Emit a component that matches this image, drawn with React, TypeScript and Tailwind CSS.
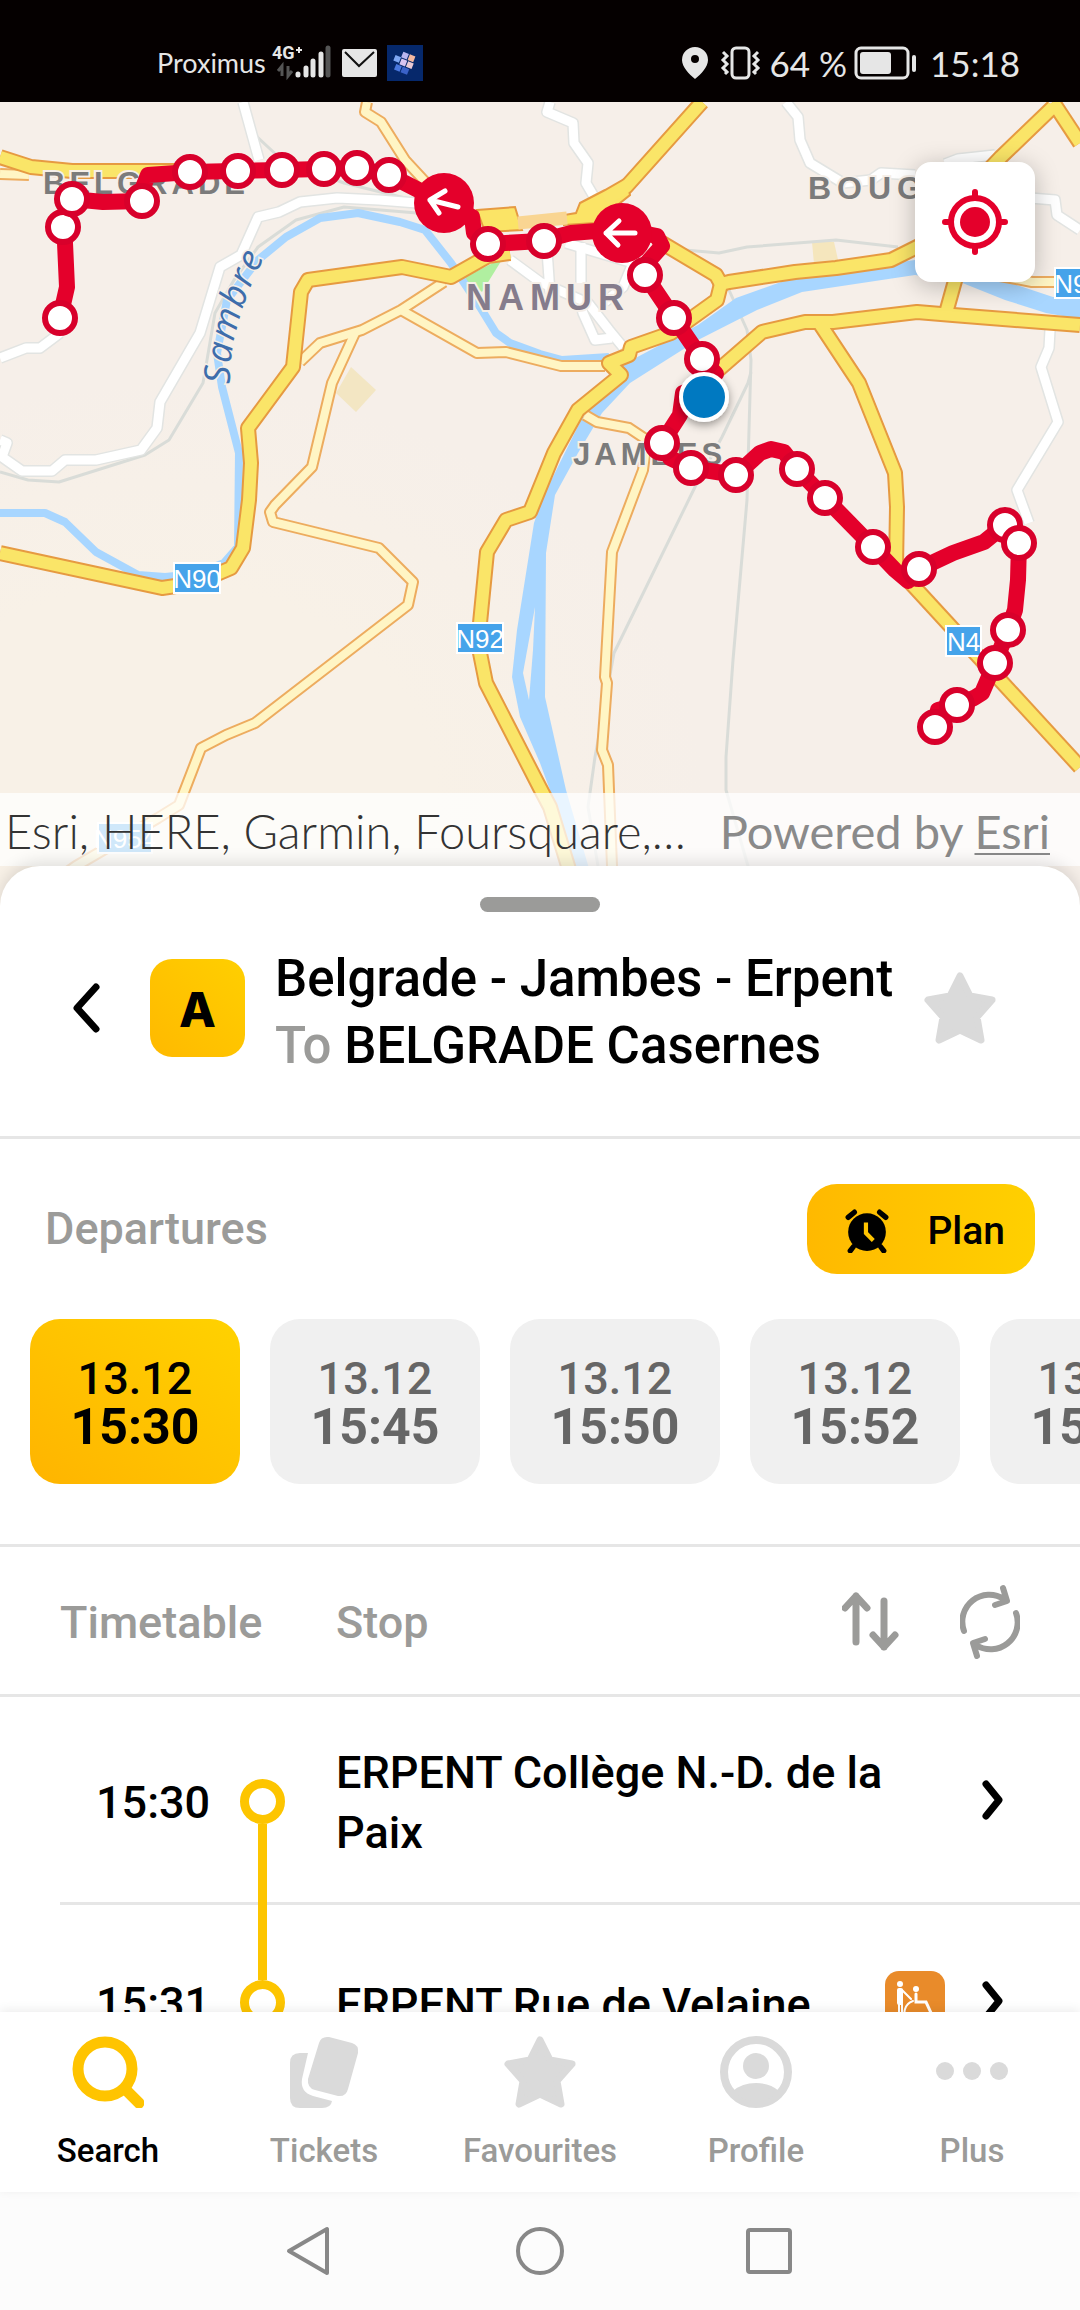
import type { ReactNode } from "react";

const RED = "#e4002b";

const rivers = [
  "M609 357L562 360L540 354L510 343L496 333L480 307L451 263L425 230L400 222L358 213L320 218L286 237L258 260L227 300L217 353L222 387L239 453L238 547L224 563L196 574L165 577L138 575L96 552L65 522L45 513H0",
];

const rails = [
  "M253 133L282 160L344 183L413 200",
  "M417 213L344 207L296 220L258 247L234 280L215 313L207 360L203 383L169 440L145 455L59 482L28 480L0 472",
  "M685 250L719 253L747 247L836 240L898 247",
  "M729 290L747 330L751 360L747 500L733 660L726 757V790L748 866L760 906",
  "M751 372L748 383L722 437L695 487L614 653L595 757L588 807L598 866",
];

const whiteRoads = [
  "M243 102L259 160",
  "M417 203L379 200L337 198L300 202L279 212L258 217L241 255L220 267L200 333L160 402L157 428L141 450L96 460H65L52 471H22L2 457L7 443L0 440",
  "M0 358L26 348H40L60 333",
  "M510 260L540 282L588 303L609 330L623 347",
  "M547 250L550 293",
  "M581 243V283",
  "M566 243L633 263L623 287L605 302",
  "M581 305L583 313L595 340L612 338",
  "M550 102L547 112L573 123L574 143L588 163L586 183L593 195",
  "M786 102L798 117L800 140L810 163L843 183L871 180L881 173L915 175",
  "M945 164L958 159L995 155",
  "M1030 198L1055 200L1057 215L1080 230",
  "M1050 330L1049 348L1041 367L1058 422L1017 490L1029 523",
];

const minorRoads = [
  "M300 362L320 343L362 330L401 310L444 282",
  "M401 310L477 353L506 352L561 366H605",
  "M355 333L332 383L312 467L275 505L270 512L273 522L379 548L413 582L408 605L255 723L226 735L201 748L179 805L158 818L76 866L20 906",
  "M367 102L365 112L381 122L405 160L430 187",
  "M0 174L29 175",
  "M585 415L597 422L629 428L647 440L643 470L612 552L605 677L607 683L602 750L608 765L612 866L614 906",
  "M1000 276L1032 282H1055",
];

const majorRoads = [
  "M0 157L31 167L72 171H190",
  "M510 253L488 256L451 277L402 267L308 280L301 292L293 367L248 428L251 463L249 500L243 548L231 568L196 583L162 588L0 553",
  "M702 102L626 187L605 200",
  "M662 243L716 275L721 284L729 282L795 272L836 268L891 260L925 243L960 200L1001 157L1053 107",
  "M1053 102L1080 143",
  "M721 284L717 300L671 333L631 347L629 355L609 363L621 375L578 410L554 453L530 512L506 520L487 552L480 623V653L486 683L540 788L550 807L568 866L580 906",
  "M716 372L762 332L805 322L833 322L917 312L953 315L1080 325",
  "M946 313L958 270",
  "M820 324L859 383L895 473L897 507L896 567",
  "M896 567L1080 767",
];

const route =
  "M60 318L67 287L65 243L63 227L72 199L103 202L142 201V190L148 175L190 172L282 170L357 168L389 175L444 203L472 217L474 233L488 244L541 241L571 233L622 229L657 236L662 246L645 265L645 275L674 318L702 359L716 374L704 385L683 393L680 415L662 443L670 458L691 468L736 475L760 453L771 449L784 452L797 469L825 498L873 547L895 570L908 581L919 569L953 553L984 542L1005 525L1019 543L1018 580L1015 610L1008 630L995 663L982 693L974 698L957 705L938 710L935 727";

const stopsOnMap = [
  [60, 318], [63, 227], [72, 199], [142, 201], [190, 172], [238, 171], [282, 170],
  [324, 169], [357, 168], [389, 175], [488, 244], [544, 241], [645, 275], [674, 318],
  [702, 359], [662, 443], [691, 468], [736, 475], [797, 469], [825, 498], [873, 547],
  [919, 569], [1005, 525], [1019, 543], [1008, 630], [995, 663], [957, 705], [935, 727],
];

const shields = [
  { x: 174, y: 563, w: 46, label: "N90" },
  { x: 457, y: 623, w: 46, label: "N92" },
  { x: 946, y: 626, w: 35, label: "N4" },
  { x: 1055, y: 268, w: 46, label: "N90" },
  { x: 98, y: 823, w: 54, label: "N954" },
];

function Lines({ paths, color, width }: { paths: string[]; color: string; width: number }) {
  return (
    <g fill="none" stroke={color} strokeWidth={width} strokeLinejoin="round">
      {paths.map((d) => (
        <path key={d} d={d} />
      ))}
    </g>
  );
}

function RouteMap() {
  return (
    <svg viewBox="0 102 1080 804" className="block w-full" role="img" aria-label="Route map">
      <defs>
        <path id="sambre" d="M230 384Q228 325 270 246" />
        <radialGradient id="land" cx="0.15" cy="0.85" r="0.5">
          <stop offset="0.5" stopColor="#f8f1e7" />
          <stop offset="1" stopColor="#f6efe9" />
        </radialGradient>
        <filter id="soft" x="-50%" y="-50%" width="200%" height="200%">
          <feDropShadow dx="0" dy="3" stdDeviation="5" floodOpacity="0.4" />
        </filter>
      </defs>
      <rect y="102" width="1080" height="804" fill="url(#land)" />
      <path d="M351 367L376 390L356 412L336 393Z" fill="#f3e6c3" />
      <path d="M812 242H834L839 264H814Z" fill="#f5e6bd" />
      <path d="M503 258L482 292L463 278Z" fill="#b0efa0" />
      <Lines paths={rails} color="#d9dcd8" width={3} />
      <Lines paths={rivers} color="#a8d6ff" width={8} />
      <path
        d="M1080 297H1053L960 266L915 260L798 276L736 298L698 325L626 363L581 420L543 497L534 523L517 630L512 677L520 717L540 763L561 820L574 906H600L588 865L566 790L545 697L546 553L555 495L578 453L602 413L630 383L671 357L698 340L757 310L802 292L915 275L960 282L1005 300L1046 313L1080 319Z"
        fill="#a8d6ff"
      />
      <path d="M535 607L523 673L529 700L533 650Z" fill="#f6efe8" />
      <Lines paths={whiteRoads} color="#e2e4e2" width={12} />
      <Lines paths={whiteRoads} color="#ffffff" width={9} />
      <Lines paths={minorRoads} color="#edac5f" width={12} />
      <Lines paths={minorRoads} color="#fff5c4" width={8} />
      <Lines paths={majorRoads} color="#e69a41" width={16} />
      <path
        d="M477 210L515 207L522 230L485 232ZM580 203L605 190L626 178L630 195L595 223L564 225V215L576 213Z"
        fill="#fbe466"
        stroke="#e69a41"
        strokeWidth="2"
      />
      <Lines paths={majorRoads} color="#fae568" width={12} />
      <path d="M518 223L567 218" stroke="#f9d592" strokeWidth="13" />

      <g
        fontFamily="Liberation Sans, sans-serif"
        fontWeight="700"
        fill="#7b7b7b"
        stroke="#f6efe8"
        strokeWidth="4"
        paintOrder="stroke"
        className="tracking-[4px]"
      >
        <text x="43" y="194" fontSize="31">BELGRADE</text>
        <text x="808" y="199" fontSize="32" className="tracking-[6px]">BOUGE</text>
        <text x="573" y="465" fontSize="31">JAMBES</text>
        <text x="466" y="310" fontSize="36" fill="#857c8c" className="tracking-[6px]">NAMUR</text>
      </g>
      <text
        fontFamily="Open Sans, sans-serif"
        fontStyle="italic"
        fontSize="36"
        fill="#3e6dab"
        stroke="#f6efe8"
        strokeWidth="3"
        paintOrder="stroke"
        className="tracking-[2px]"
      >
        <textPath href="#sambre">Sambre</textPath>
      </text>

      {shields.map((s) => (
        <g key={`${s.label}-${s.x}`}>
          <rect x={s.x} y={s.y} width={s.w} height="30" fill="#45a3ea" stroke="#fff" strokeWidth="2" />
          <text
            x={s.x + s.w / 2}
            y={s.y + 25}
            textAnchor="middle"
            fontFamily="Liberation Sans, sans-serif"
            fontSize="26"
            fill="#fff"
          >
            {s.label}
          </text>
        </g>
      ))}

      <path d={route} fill="none" stroke={RED} strokeWidth="16" strokeLinejoin="round" />
      <circle cx="444" cy="203" r="30" fill={RED} />
      <circle cx="622" cy="233" r="30" fill={RED} />
      <g fill="none" stroke="#fff" strokeWidth="5" strokeLinecap="round" strokeLinejoin="round">
        <path d="M458 207L430 200M445 191L430 200L439 213" />
        <path d="M635 233H606M619 221L606 233L618 245" />
      </g>
      <g fill="#fff" stroke="#d8002b" strokeWidth="6">
        {stopsOnMap.map(([x, y]) => (
          <circle key={`${x}-${y}`} cx={x} cy={y} r="15" />
        ))}
      </g>
      <circle cx="704" cy="397" r="23" fill="#0079c1" stroke="#fff" strokeWidth="4" filter="url(#soft)" />
    </svg>
  );
}

function StatusBar() {
  return (
    <header className="flex h-[102px] shrink-0 items-end justify-between bg-[#050000] pr-[60px] pb-[18px] pl-[157px] font-['Lato',sans-serif] text-[#e6e6e6]">
      <div className="flex h-[42px] items-center">
        <span className="text-[27px]">Proximus</span>
        <svg width="62" height="42" viewBox="0 0 62 42" className="ml-1" aria-label="Signal">
          <text x="2" y="17" fontFamily="Roboto, sans-serif" fontWeight="700" fontSize="18" fill="#e6e6e6">4G</text>
          <path d="M26 8H32M29 5V11" stroke="#e6e6e6" strokeWidth="2" />
          <path d="M12 34V24L8 29M18 24V34L22 29" fill="none" stroke="#555" strokeWidth="3" />
          <g stroke="#e6e6e6" strokeWidth="5" strokeLinecap="round">
            <path d="M28 32V33M36 26V33M43 19V33M51 12V33" />
            <path d="M58 6V33" stroke="#555" />
          </g>
        </svg>
        <svg width="35" height="28" viewBox="0 0 35 28" className="ml-[10px]" aria-label="Mail">
          <rect width="35" height="28" rx="2" fill="#e6e6e6" />
          <path d="M3 3L17 17L32 3" fill="none" stroke="#111" strokeWidth="2" />
        </svg>
        <svg width="36" height="36" viewBox="0 0 36 36" className="ml-[10px]" aria-label="App notification">
          <rect width="36" height="36" fill="#06286b" />
          <g transform="rotate(22 18 16)">
            <rect x="13" y="8" width="6" height="6" fill="#b9b4ee" />
            <rect x="20" y="8" width="6" height="6" fill="#f3b8a0" />
            <rect x="7" y="14" width="6" height="6" fill="#7ea6f2" />
            <rect x="14" y="15" width="6" height="6" fill="#d8c4f0" />
            <rect x="21" y="15" width="6" height="6" fill="#e9c9d4" />
            <rect x="11" y="22" width="6" height="6" fill="#4a78de" />
            <rect x="18" y="22" width="7" height="6" fill="#3a62c8" />
          </g>
        </svg>
      </div>
      <div className="flex h-[42px] items-center">
        <svg width="26" height="32" viewBox="0 0 26 32" aria-label="Location">
          <path
            fillRule="evenodd"
            d="M13 0A13 13 0 0 1 26 13C26 20 19 27 13 32C7 27 0 20 0 13A13 13 0 0 1 13 0ZM13 8A4 4 0 1 0 13 16A4 4 0 1 0 13 8Z"
            fill="#e6e6e6"
          />
        </svg>
        <svg width="42" height="34" viewBox="0 0 42 34" className="ml-[12px]" fill="none" stroke="#e6e6e6" strokeWidth="3" aria-label="Vibrate">
          <rect x="12" y="2" width="17" height="30" rx="4" />
          <path d="M3 6L7 10L3 14L7 18L3 22L7 26L5 28M38 6L34 10L38 14L34 18L38 22L34 26L36 28" />
        </svg>
        <span className="ml-[7px] text-[35px]">64 %</span>
        <svg width="64" height="34" viewBox="0 0 64 34" className="ml-[7px]" aria-label="Battery">
          <rect x="2" y="2" width="52" height="30" rx="5" fill="none" stroke="#e6e6e6" strokeWidth="3" />
          <rect x="6" y="6" width="31" height="22" rx="3" fill="#e6e6e6" />
          <rect x="58" y="9" width="4" height="17" rx="2" fill="#e6e6e6" />
        </svg>
        <span className="ml-[12px] text-[35px]">15:18</span>
      </div>
    </header>
  );
}

const STAR = "M36 4L46 24L68 28L53 45L57 68L36 58L15 68L19 45L4 28L26 24Z";

function Star() {
  return (
    <svg width="72" height="72" viewBox="0 0 72 72" aria-hidden="true">
      <path d={STAR} fill="#dadada" stroke="#dadada" strokeWidth="7" strokeLinejoin="round" />
    </svg>
  );
}

const departures = ["15:30", "15:45", "15:50", "15:52", "15:55"];

const stops = [
  { time: "15:30", name: "ERPENT Collège N.-D. de la Paix", assisted: false },
  { time: "15:31", name: "ERPENT Rue de Velaine", assisted: true },
];

function Assisted() {
  return (
    <svg width="60" height="60" viewBox="0 0 60 60" className="shrink-0" role="img" aria-label="Accessible with assistance">
      <rect width="60" height="60" rx="14" fill="#e98b2a" />
      <g fill="#fff">
        <circle cx="15" cy="13" r="3" />
        <circle cx="31" cy="18" r="3" />
        <rect x="12" y="17" width="6" height="17" rx="2" />
      </g>
      <g fill="none" stroke="#fff" strokeWidth="2" strokeLinecap="round">
        <path d="M14 33V50M17 33V50M17 19L26 28" />
        <path d="M28 30A12 12 0 1 0 43 45" />
        <path d="M31 23V31H41L47 44" strokeWidth="3" />
      </g>
    </svg>
  );
}

function StopsTable() {
  return (
    <table className="block w-full text-left">
      <thead className="block">
        <tr className="flex h-[150px] items-center border-b-[3px] border-[#e6e6e6] text-[45px] text-[#9b9b99]">
          <th className="w-[336px] pt-1 pl-[60px] font-medium">Timetable</th>
          <th className="flex-1 pt-1 font-medium">Stop</th>
          <td className="flex items-center gap-[60px] pr-[60px]">
            <button type="button" aria-label="Reverse direction">
              <svg width="58" height="60" viewBox="0 0 58 60" fill="none" stroke="#9b9b99" strokeWidth="7" strokeLinecap="round" strokeLinejoin="round">
                <path d="M14 5V51M3 17L14 5L25 17M42 10V56M31 44L42 56L53 44" />
              </svg>
            </button>
            <button type="button" aria-label="Refresh">
              <svg width="60" height="76" viewBox="0 -2 60 76" fill="none" stroke="#9b9b99" strokeWidth="6" strokeLinecap="round" strokeLinejoin="round">
                <path d="M4 46A27 27 0 0 1 44 14M43 3L47 16L35 20" />
                <path d="M56 28A27 27 0 0 1 16 60M17 71L13 58L25 54" />
              </svg>
            </button>
          </td>
        </tr>
      </thead>
      <tbody className="block">
        {stops.map((stop, i) => (
          <tr key={stop.time} className="ml-[60px] flex min-h-[195px] items-center border-b-[3px] border-[#e6e6e6] text-[45px] leading-[60px] font-medium">
            <td className="w-[180px] pt-1.5 pl-9">{stop.time}</td>
            <td className="-mb-[3px] flex w-[45px] flex-col items-center self-stretch">
              <span className={i === 0 ? "flex-1" : "w-[9px] flex-1 bg-[#fdc500]"} />
              <span className="size-[45px] rounded-full border-[9px] border-[#fdc500]" />
              <span className="w-[9px] flex-1 bg-[#fdc500]" />
            </td>
            <td className="ml-[51px] flex-1 pt-[46px] pb-[39px]">{stop.name}</td>
            <td className="flex items-center gap-9 pr-[75px] pl-5">
              {stop.assisted && <Assisted />}
              <button type="button" aria-label={`Open ${stop.name}`}>
                <svg width="24" height="40" viewBox="0 0 24 40" fill="none" stroke="#000" strokeWidth="7" strokeLinecap="round" strokeLinejoin="round">
                  <path d="M5 4L18 20L5 36" />
                </svg>
              </button>
            </td>
          </tr>
        ))}
      </tbody>
    </table>
  );
}

function Sheet() {
  return (
    <main className="relative -mt-10 min-h-0 flex-1 overflow-hidden rounded-t-[40px] bg-white shadow-[0_-4px_16px_rgba(0,0,0,0.12)]">
      <div className="mx-auto mt-[31px] h-[15px] w-[120px] rounded-full bg-[#9b9b99]" />

      <section className="flex items-center border-b-[3px] border-[#e6e6e6] pt-[25px] pr-[84px] pb-[57px] pl-[56px]">
        <button type="button" aria-label="Back" className="flex w-[60px] justify-center">
          <svg width="28" height="50" viewBox="0 0 28 50" fill="none" stroke="#000" strokeWidth="7" strokeLinecap="round" strokeLinejoin="round">
            <path d="M24 4L5 25L24 46" />
          </svg>
        </button>
        <span className="ml-[34px] flex h-[98px] w-[95px] items-center justify-center rounded-[22px] bg-linear-to-tr from-[#ffb900] to-[#ffcf00] pt-1 font-['Inter',sans-serif] text-[48px] font-extrabold">
          A
        </span>
        <h1 className="ml-[30px] flex-1 pt-2 text-[51px] leading-[67px] font-medium whitespace-nowrap">
          Belgrade - Jambes - Erpent
          <br />
          <span className="text-[#9b9b99]">To</span> BELGRADE Casernes
        </h1>
        <button type="button" aria-label="Add to favourites">
          <Star />
        </button>
      </section>

      <section className="border-b-[3px] border-[#e6e6e6] pt-[45px] pb-[60px]">
        <div className="flex items-center justify-between pr-[45px] pl-[45px]">
          <h2 className="text-[45px] font-medium text-[#9b9b99]">Departures</h2>
          <button type="button" className="flex h-[90px] items-center gap-[38px] rounded-[30px] bg-linear-to-r from-[#ffb900] to-[#ffd000] pt-1 pr-[30px] pl-[38px] text-[39px] font-medium">
            <svg width="44" height="44" viewBox="0 0 42 42" aria-hidden="true">
              <circle cx="21" cy="22" r="18" />
              <path d="M3 8L9 3M39 8L33 3M5 40L8 36M37 40L34 36" stroke="#000" strokeWidth="5" strokeLinecap="round" />
              <path d="M20 13V23L27 30" fill="none" stroke="#ffc400" strokeWidth="4" />
            </svg>
            Plan
          </button>
        </div>
        <div className="mt-[45px] flex gap-[30px] overflow-hidden pl-[30px]">
          {departures.map((time, i) => (
            <button
              key={time}
              type="button"
              className={
                i === 0
                  ? "flex h-[165px] w-[210px] shrink-0 flex-col items-center justify-center rounded-[30px] bg-linear-to-tr from-[#ffb400] to-[#ffd200] pt-0.5 text-black"
                  : "flex h-[165px] w-[210px] shrink-0 flex-col items-center justify-center rounded-[30px] bg-[#f0f0f0] pt-0.5 text-[#666]"
              }
            >
              <span className="text-[45px] leading-[48px] font-medium">13.12</span>
              <span className="text-[50px] leading-[48px] font-bold">{time}</span>
            </button>
          ))}
        </div>
      </section>

      <StopsTable />
    </main>
  );
}

function Tab({ label, active, children }: { label: string; active?: boolean; children: ReactNode }) {
  return (
    <a href="#" className={active ? "flex flex-1 flex-col items-center text-black" : "flex flex-1 flex-col items-center text-[#9b9b99]"}>
      {children}
      <span className="mt-[23px] text-[33px] leading-[40px] font-medium">{label}</span>
    </a>
  );
}

function TabBar() {
  return (
    <nav className="relative flex h-[180px] shrink-0 bg-white pt-6 shadow-[0_-2px_10px_rgba(0,0,0,0.08)]">
      <Tab label="Search" active>
        <svg width="72" height="72" viewBox="0 0 72 72" fill="none" stroke="#ffc400" strokeWidth="11" strokeLinecap="round" aria-hidden="true">
          <circle cx="33" cy="33" r="27" />
          <path d="M54 54L67 67" />
        </svg>
      </Tab>
      <Tab label="Tickets">
        <svg width="72" height="72" viewBox="0 0 72 72" fill="#dadada" aria-hidden="true">
          <path d="M41 1L64 7Q71 9 70 17L60 53Q58 61 50 60L27 54Q19 52 20 43L31 7Q33 0 41 1Z" />
          <path d="M20 17H12Q2 17 2 27V62Q2 72 12 72H34Q43 72 44 65L25 60Q12 56 14 43Z" />
        </svg>
      </Tab>
      <Tab label="Favourites">
        <Star />
      </Tab>
      <Tab label="Profile">
        <svg width="72" height="72" viewBox="0 0 72 72" fill="#dadada" aria-hidden="true">
          <circle cx="36" cy="36" r="32" fill="none" stroke="#dadada" strokeWidth="8" />
          <circle cx="36" cy="30" r="13" />
          <path d="M13 55Q22 47 36 47T59 55A31 31 0 0 1 13 55Z" />
        </svg>
      </Tab>
      <Tab label="Plus">
        <svg width="72" height="72" viewBox="0 0 72 72" fill="#dadada" aria-hidden="true">
          <circle cx="9" cy="35" r="9" />
          <circle cx="36" cy="35" r="9" />
          <circle cx="63" cy="35" r="9" />
        </svg>
      </Tab>
    </nav>
  );
}

function SystemBar() {
  return (
    <footer className="flex h-[118px] shrink-0 items-center justify-center gap-[179px] bg-[#fcfcfc]">
      <button type="button" aria-label="System back">
        <svg width="50" height="50" viewBox="0 0 50 50" fill="none" stroke="#888" strokeWidth="4" strokeLinejoin="round">
          <path d="M41 3V47L3 25Z" />
        </svg>
      </button>
      <button type="button" aria-label="Home">
        <svg width="50" height="50" viewBox="0 0 50 50" fill="none" stroke="#888" strokeWidth="4">
          <circle cx="25" cy="25" r="22" />
        </svg>
      </button>
      <button type="button" aria-label="Recent apps">
        <svg width="50" height="50" viewBox="0 0 50 50" fill="none" stroke="#888" strokeWidth="4">
          <rect x="4" y="4" width="42" height="42" rx="2" />
        </svg>
      </button>
    </footer>
  );
}

export default function App() {
  return (
    <div className="flex h-screen w-full flex-col overflow-hidden bg-white font-['Roboto',sans-serif] text-black">
      <StatusBar />
      <section className="relative shrink-0">
        <RouteMap />
        <button
          type="button"
          aria-label="Locate me"
          className="absolute top-[60px] right-[45px] flex size-[120px] items-center justify-center rounded-2xl bg-white shadow-[0_4px_24px_rgba(0,0,0,0.25)]"
        >
          <svg width="66" height="66" viewBox="0 0 66 66" fill="none" stroke={RED} strokeWidth="6" strokeLinecap="round">
            <circle cx="33" cy="33" r="24" />
            <circle cx="33" cy="33" r="15" fill={RED} stroke="none" />
            <path d="M33 3V9M33 57V63M3 33H9M57 33H63" />
          </svg>
        </button>
        <div className="absolute inset-x-0 bottom-10 flex h-[73px] items-center justify-between bg-white/75 pt-1 pr-[30px] pl-[5px] font-['Lato',sans-serif] text-[47px] whitespace-nowrap">
          <span className="font-light text-[#333]">Esri, HERE, Garmin, Foursquare,…</span>
          <span className="text-[#8a8a8a]">
            Powered by{" "}
            <a href="https://www.esri.com" className="underline decoration-2 underline-offset-4">
              Esri
            </a>
          </span>
        </div>
      </section>
      <Sheet />
      <TabBar />
      <SystemBar />
    </div>
  );
}
